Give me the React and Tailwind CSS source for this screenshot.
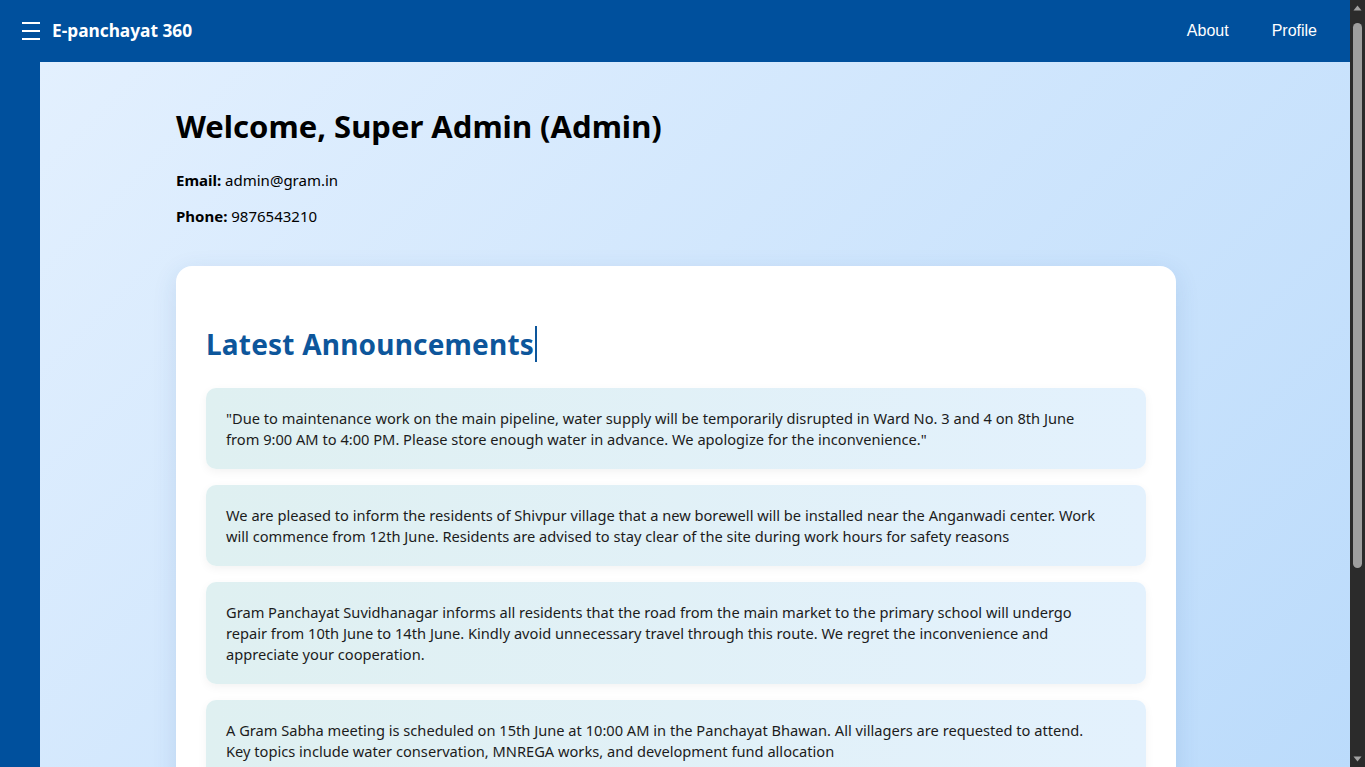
import React from "react";

const items = [
  [
    "\"Due to maintenance work on the main pipeline, water supply will be temporarily disrupted in Ward No. 3 and 4 on 8th June",
    "from 9:00 AM to 4:00 PM. Please store enough water in advance. We apologize for the inconvenience.\"",
  ],
  [
    "We are pleased to inform the residents of Shivpur village that a new borewell will be installed near the Anganwadi center. Work",
    "will commence from 12th June. Residents are advised to stay clear of the site during work hours for safety reasons",
  ],
  [
    "Gram Panchayat Suvidhanagar informs all residents that the road from the main market to the primary school will undergo",
    "repair from 10th June to 14th June. Kindly avoid unnecessary travel through this route. We regret the inconvenience and",
    "appreciate your cooperation.",
  ],
  [
    "A Gram Sabha meeting is scheduled on 15th June at 10:00 AM in the Panchayat Bhawan. All villagers are requested to attend.",
    "Key topics include water conservation, MNREGA works, and development fund allocation",
  ],
];

export default function App() {
  return (
    <div className="h-[767px] flex overflow-hidden bg-[#00509d] text-black font-['Noto_Sans',sans-serif]">
      <div className="flex-1 min-w-0 overflow-hidden">
        <nav className="h-[62px] bg-[#00509d] flex items-center justify-between pl-[22px] pr-[33px]">
          <div className="flex items-center">
            <div className="flex flex-col gap-[6px] w-[18px] mr-[12px]">
              <span className="block h-[2px] bg-white" />
              <span className="block h-[2px] bg-white" />
              <span className="block h-[2px] bg-white" />
            </div>
            <span className="text-white font-bold text-[17.3px] leading-[24px]">E-panchayat 360</span>
          </div>
          <div className="flex items-center gap-[43px] font-['Liberation_Sans',Arial,sans-serif] text-white text-[16px]">
            <span>About</span>
            <span>Profile</span>
          </div>
        </nav>
        <div className="flex">
          <div className="w-[40px] shrink-0 bg-[#00509d]" />
          <main className="flex-1 bg-linear-135 from-[#e3f0fe] to-[#b9dafb] pl-[136px] pr-[174px] pt-[42px] pb-[60px]">
            <h1 className="text-[31px] leading-[44px] font-bold text-black">Welcome, Super Admin (Admin)</h1>
            <p className="mt-[22px] text-[15px] leading-[20px]"><b>Email:</b> admin@gram.in</p>
            <p className="mt-[16px] text-[15px] leading-[20px]"><b>Phone:</b> 9876543210</p>
            <section className="mt-[40px] bg-white rounded-[16px] shadow-[0_6px_24px_rgba(30,80,150,0.12)] px-[30px] pt-[60px] pb-[30px]">
              <h2 className="inline-block text-[28px] leading-[36px] font-bold text-[#0d569b] tracking-[0.2px] border-r-2 border-[#0d569b] pr-[1px]">
                Latest Announcements
              </h2>
              <div className="mt-[26px] flex flex-col gap-[16px]">
                {items.map((lines, i) => (
                  <div
                    key={i}
                    className="rounded-[10px] bg-linear-to-r from-[#dff0f1] to-[#e3f1fd] shadow-[0_3px_10px_rgba(0,0,0,0.05)] px-[20px] pt-[20px] pb-[19px] text-[14.65px] leading-[21px] text-[#1c1c1c]"
                  >
                    {lines.map((l, j) => (
                      <div key={j} className="whitespace-nowrap">{l}</div>
                    ))}
                  </div>
                ))}
              </div>
            </section>
          </main>
        </div>
      </div>
      <div className="w-[15px] shrink-0 bg-[#2b2b2b] flex flex-col items-center">
        <svg width="15" height="17" viewBox="0 0 15 17" className="shrink-0">
          <path d="M3.5 10.5 L7.5 5.5 L11.5 10.5 Z" fill="#a3a3a3" />
        </svg>
        <div className="w-[9px] h-[545px] mt-[6px] rounded-[5px] bg-[#9f9f9f]" />
        <div className="flex-1" />
        <svg width="15" height="17" viewBox="0 0 15 17" className="shrink-0">
          <path d="M3.5 6.5 L7.5 11.5 L11.5 6.5 Z" fill="#a3a3a3" />
        </svg>
      </div>
    </div>
  );
}
